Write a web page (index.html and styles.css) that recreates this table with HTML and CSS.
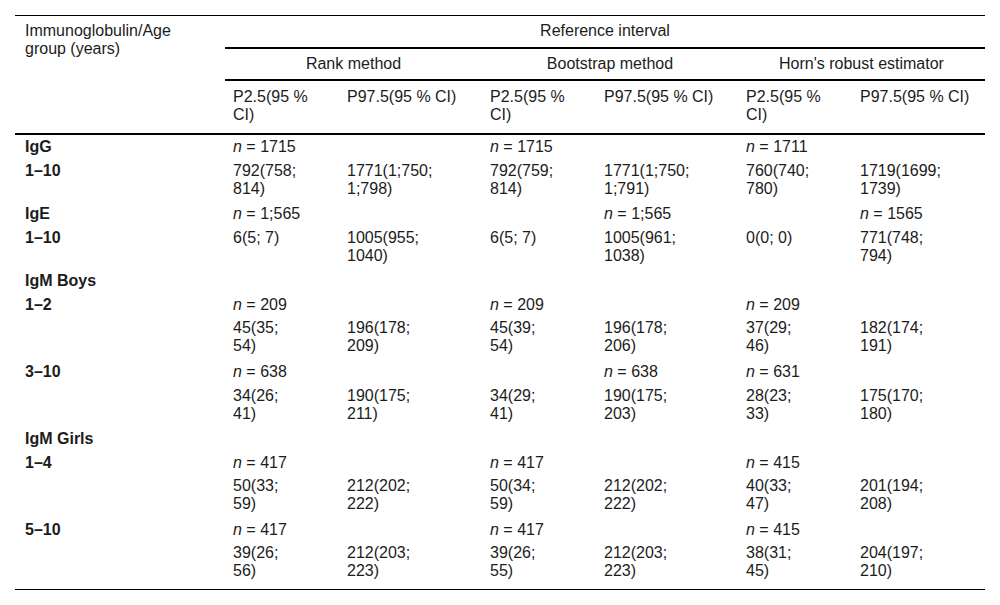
FILE: index.html
```html
<!DOCTYPE html>
<html lang="en">
<head>
<meta charset="utf-8">
<title>Reference intervals</title>
<link rel="stylesheet" href="styles.css">
</head>
<body>
<div class="page">
<table class="ri">
<colgroup>
<col class="c-label"><col class="c-lo"><col class="c-hi"><col class="c-lo"><col class="c-hi2"><col class="c-lo"><col class="c-hi3">
</colgroup>
<thead>
<tr>
<th class="h-label" rowspan="3">Immunoglobulin/Age<br>group (years)</th>
<th class="h-span h-top" colspan="6">Reference interval</th>
</tr>
<tr>
<th class="h-span h-mid" colspan="2">Rank method</th>
<th class="h-span h-mid" colspan="2">Bootstrap method</th>
<th class="h-span h-mid" colspan="2">Horn's robust estimator</th>
</tr>
<tr>
<th class="h-sub">P2.5(95 %<br>CI)</th>
<th class="h-sub">P97.5(95 % CI)</th>
<th class="h-sub">P2.5(95 %<br>CI)</th>
<th class="h-sub">P97.5(95 % CI)</th>
<th class="h-sub">P2.5(95 %<br>CI)</th>
<th class="h-sub">P97.5(95 % CI)</th>
</tr>
</thead>
<tbody>
<tr><th>IgG</th><td><i>n</i> = 1715</td><td></td><td><i>n</i> = 1715</td><td></td><td><i>n</i> = 1711</td><td></td></tr>
<tr class="two"><th>1–10</th><td>792(758;<br>814)</td><td>1771(1;750;<br>1;798)</td><td>792(759;<br>814)</td><td>1771(1;750;<br>1;791)</td><td>760(740;<br>780)</td><td>1719(1699;<br>1739)</td></tr>
<tr><th>IgE</th><td><i>n</i> = 1;565</td><td></td><td></td><td><i>n</i> = 1;565</td><td></td><td><i>n</i> = 1565</td></tr>
<tr class="two"><th>1–10</th><td>6(5; 7)</td><td>1005(955;<br>1040)</td><td>6(5; 7)</td><td>1005(961;<br>1038)</td><td>0(0; 0)</td><td>771(748;<br>794)</td></tr>
<tr><th>IgM Boys</th><td></td><td></td><td></td><td></td><td></td><td></td></tr>
<tr><th>1–2</th><td><i>n</i> = 209</td><td></td><td><i>n</i> = 209</td><td></td><td><i>n</i> = 209</td><td></td></tr>
<tr class="two"><th></th><td>45(35;<br>54)</td><td>196(178;<br>209)</td><td>45(39;<br>54)</td><td>196(178;<br>206)</td><td>37(29;<br>46)</td><td>182(174;<br>191)</td></tr>
<tr><th>3–10</th><td><i>n</i> = 638</td><td></td><td></td><td><i>n</i> = 638</td><td><i>n</i> = 631</td><td></td></tr>
<tr class="two"><th></th><td>34(26;<br>41)</td><td>190(175;<br>211)</td><td>34(29;<br>41)</td><td>190(175;<br>203)</td><td>28(23;<br>33)</td><td>175(170;<br>180)</td></tr>
<tr><th>IgM Girls</th><td></td><td></td><td></td><td></td><td></td><td></td></tr>
<tr><th>1–4</th><td><i>n</i> = 417</td><td></td><td><i>n</i> = 417</td><td></td><td><i>n</i> = 415</td><td></td></tr>
<tr class="two"><th></th><td>50(33;<br>59)</td><td>212(202;<br>222)</td><td>50(34;<br>59)</td><td>212(202;<br>222)</td><td>40(33;<br>47)</td><td>201(194;<br>208)</td></tr>
<tr><th>5–10</th><td><i>n</i> = 417</td><td></td><td><i>n</i> = 417</td><td></td><td><i>n</i> = 415</td><td></td></tr>
<tr class="two"><th></th><td>39(26;<br>56)</td><td>212(203;<br>223)</td><td>39(26;<br>55)</td><td>212(203;<br>223)</td><td>38(31;<br>45)</td><td>204(197;<br>210)</td></tr>
</tbody>
</table>
</div>
</body>
</html>
```
FILE: styles.css
```css
html, body {
  margin: 0;
  padding: 0;
  background: #ffffff;
}

.page {
  padding: 15px;
}

.ri {
  width: 970px;
  table-layout: fixed;
  border-collapse: separate;
  border-spacing: 0;
  border-top: 1px solid #000;
  border-bottom: 1px solid #000;
  font-family: "Liberation Sans", Arial, sans-serif;
  font-size: 16px;
  line-height: 18px;
  color: #1c1c1c;
}

.c-label { width: 210px; }
.c-lo { width: 114px; }
.c-hi { width: 143px; }
.c-hi2 { width: 142px; }
.c-hi3 { width: 133px; }

.ri th,
.ri td {
  text-align: left;
  vertical-align: top;
  white-space: nowrap;
  padding: 3px 8px 2.5px 10px;
  font-weight: normal;
}

.ri thead th {
  border-bottom: 2px solid #000;
}

.ri .h-label {
  padding-top: 6px;
}

.ri .h-span {
  text-align: center;
  padding-left: 0;
  padding-right: 0;
}

.ri .h-top {
  padding-top: 6px;
  padding-bottom: 7px;
}

.ri .h-mid {
  padding-top: 6px;
  padding-bottom: 6px;
}

.ri .h-sub {
  padding-top: 7px;
  padding-bottom: 9px;
  padding-left: 8px;
}

.ri tbody th {
  font-weight: bold;
}

.ri tbody td {
  padding-left: 8px;
}

.ri tbody tr.two th,
.ri tbody tr.two td {
  padding-bottom: 4.7px;
}

.ri tbody tr:last-child th,
.ri tbody tr:last-child td {
  padding-bottom: 9px;
}

.ri i {
  font-style: italic;
}
```
